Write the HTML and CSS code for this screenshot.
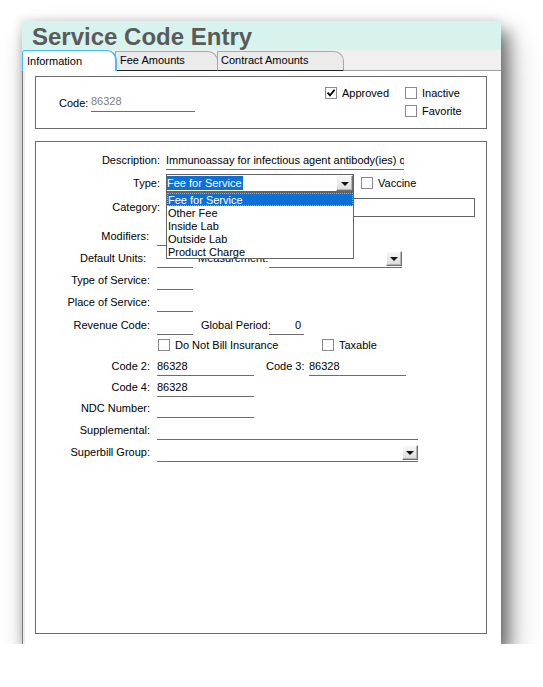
FILE: index.html
```html
<!DOCTYPE html>
<html>
<head>
<meta charset="utf-8">
<title>Service Code Entry</title>
<link rel="stylesheet" href="styles.css">
</head>
<body>
<div class="window">
  <div class="titlebar">Service Code Entry</div>
  <div class="tabbar">
    <div class="tab tab-info">Information</div>
    <div class="tab tab-fee">Fee Amounts</div>
    <div class="tab tab-contract">Contract Amounts</div>
    <div class="tab-fill"></div>
  </div>
  <div class="content">
    <div class="group group-top">
      <span class="code-lbl">Code:</span>
      <span class="code-field">86328</span>
      <div class="flags">
        <div class="chk flag-approved">
          <span class="box"><svg width="10" height="10" viewBox="0 0 10 10"><path d="M1.6 4.6 L4 7.4 L8.6 1.8" fill="none" stroke="#000" stroke-width="1.8"/></svg></span>Approved
        </div>
        <div class="flag-col">
          <div class="chk"><span class="box"></span>Inactive</div>
          <div class="chk"><span class="box"></span>Favorite</div>
        </div>
      </div>
    </div>

    <div class="group group-main">
      <div class="row row-top">
        <span class="lbl">Description:</span>
        <span class="fld w-desc">Immunoassay for infectious agent antibody(ies) qualitative</span>
      </div>
      <div class="row row-top row-type">
        <span class="lbl">Type:</span>
        <div class="select">
          <span class="sel-text">Fee for Service</span>
          <span class="ddbtn"><span class="tri"></span></span>
          <div class="ddlist">
            <div class="opt hl">Fee for Service</div>
            <div class="opt">Other Fee</div>
            <div class="opt">Inside Lab</div>
            <div class="opt">Outside Lab</div>
            <div class="opt">Product Charge</div>
          </div>
        </div>
        <div class="chk chk-vaccine"><span class="box"></span>Vaccine</div>
      </div>
      <div class="row row-top row-cat">
        <span class="lbl">Category:</span>
        <span class="cat"></span>
      </div>
      <div class="row row-mod">
        <span class="lbl lbl-mod">Modifiers:</span>
        <span class="fld w-short"></span>
      </div>
      <div class="row">
        <span class="lbl lbl-du">Default Units:</span>
        <span class="fld w-short"></span>
        <span class="sublbl sub-meas">Measurement:</span>
        <span class="fld uselect w-meas"><span class="ddbtn ddbtn-sm"><span class="tri"></span></span></span>
      </div>
      <div class="row">
        <span class="lbl">Type of Service:</span>
        <span class="fld w-short"></span>
      </div>
      <div class="row">
        <span class="lbl">Place of Service:</span>
        <span class="fld w-short"></span>
      </div>
      <div class="row row-rev">
        <span class="lbl">Revenue Code:</span>
        <span class="fld w-short"></span>
        <span class="sublbl sub-global">Global Period:</span>
        <span class="fld w-global">0</span>
      </div>
      <div class="row row-dnb">
        <span class="lbl"></span>
        <div class="chk chk-dnb"><span class="box"></span>Do Not Bill Insurance</div>
        <div class="chk"><span class="box"></span>Taxable</div>
      </div>
      <div class="row row-tight">
        <span class="lbl">Code 2:</span>
        <span class="fld w-code">86328</span>
        <span class="sublbl sub-code3">Code 3:</span>
        <span class="fld w-code">86328</span>
      </div>
      <div class="row row-tight">
        <span class="lbl">Code 4:</span>
        <span class="fld w-code">86328</span>
      </div>
      <div class="row row-tight">
        <span class="lbl">NDC Number:</span>
        <span class="fld w-code"></span>
      </div>
      <div class="row">
        <span class="lbl">Supplemental:</span>
        <span class="fld w-long"></span>
      </div>
      <div class="row">
        <span class="lbl">Superbill Group:</span>
        <span class="fld uselect w-long"><span class="ddbtn ddbtn-sm"><span class="tri"></span></span></span>
      </div>
    </div>
  </div>
</div>
</body>
</html>
```

FILE: styles.css
```css
* { box-sizing: border-box; }

body {
  margin: 0;
  background: #fff;
  font-family: "Liberation Sans", Arial, sans-serif;
  font-size: 11px;
  color: #000;
}

.window {
  margin: 21px 0 0 22px;
  width: 479px;
  height: 623px;
  display: flex;
  flex-direction: column;
  background: #fff;
  box-shadow: 7px 10px 16px rgba(0, 0, 0, 0.5), 10px 20px 32px rgba(0, 0, 0, 0.22), -2px -2px 8px rgba(0, 0, 0, 0.08);
}

.titlebar {
  height: 29px;
  padding: 3px 0 0 10px;
  background: #d8f3ee;
  color: #5a5a5a;
  font-size: 24px;
  font-weight: bold;
  line-height: 26px;
  white-space: nowrap;
}

.tabbar {
  height: 21px;
  background: #f0f0f0;
  display: flex;
  align-items: flex-end;
}

.tab {
  height: 20px;
  padding: 2px 0 0 4px;
  background: #ebebeb;
  border: 1px solid #a8a8a8;
  border-bottom: 1px solid #222;
  border-top-right-radius: 10px;
  line-height: 13px;
  white-space: nowrap;
}

.tab-info {
  width: 95px;
  height: 21px;
  padding-top: 4px;
  background: #fff;
  border: 1px solid #43c0ef;
  border-right-width: 2px;
  border-bottom: none;
  border-top-left-radius: 3px;
  position: relative;
  z-index: 1;
}

.tab-fee {
  width: 103px;
  margin-left: -2px;
}

.tab-contract {
  width: 127px;
  margin-left: -1px;
  padding-left: 3px;
}

.tab-fill {
  flex: 1;
  height: 1px;
  background: #a0a0a0;
}

.content {
  flex: 1;
  border-left: 1px solid #7a7a7a;
  box-shadow: inset 2px 0 #ececec;
  padding: 5px 14px 10px 12px;
  display: flex;
  flex-direction: column;
  gap: 12px;
}

.group {
  border: 1px solid #6b6b6b;
}

/* top group */
.group-top {
  height: 53px;
  flex: none;
  display: flex;
  align-items: center;
  padding-left: 23px;
}

.code-lbl {
  width: 32px;
}

.code-field {
  width: 104px;
  height: 19px;
  line-height: 17px;
  border-bottom: 1px solid #6d6d6d;
  color: #808080;
}

.flags {
  margin-left: 130px;
  margin-top: -1px;
  display: flex;
}

.flag-approved {
  width: 80px;
  align-self: flex-start;
}

.flag-col {
  display: flex;
  flex-direction: column;
}

.chk {
  display: flex;
  align-items: center;
  height: 18px;
  gap: 5px;
  white-space: nowrap;
}

.box {
  width: 12px;
  height: 12px;
  flex: none;
  border: 1px solid #8a8a8a;
  background: #fff;
  display: flex;
  align-items: center;
  justify-content: center;
}

/* main group */
.group-main {
  flex: 1;
  padding-top: 8px;
  display: flex;
  flex-direction: column;
  gap: 2px;
}

.row {
  display: flex;
  align-items: center;
  height: 20px;
  flex: none;
}

.row-type { margin-top: 1px; }
.row-cat { margin-top: 2px; }
.row-mod { margin-top: 7px; }
.row-rev { margin-top: 1px; }
.row-dnb { margin-top: -2px; }
.row-tight { margin-top: -1px; }

.lbl {
  flex: none;
  width: 114px;
  margin-right: 7px;
  text-align: right;
  white-space: nowrap;
}

.row-top .lbl {
  width: 124px;
  margin-right: 6px;
}

.lbl-mod {
  width: 113px;
  margin-right: 8px;
}

.lbl-du {
  width: 110px;
  margin-right: 11px;
}

.fld {
  flex: none;
  height: 19px;
  line-height: 18px;
  border-bottom: 1px solid #6d6d6d;
  white-space: nowrap;
  overflow: hidden;
}

.w-desc { width: 238px; }
.w-short { width: 36px; }
.w-code { width: 97px; }
.w-long { width: 261px; }
.w-meas { width: 133px; }
.w-global {
  width: 35px;
  text-align: right;
  padding-right: 3px;
}

.sublbl {
  flex: none;
  white-space: nowrap;
}

.sub-meas {
  margin-left: 5px;
  width: 71px;
}

.sub-global {
  margin-left: 8px;
  width: 68px;
}

.sub-code3 {
  margin-left: 12px;
  width: 43px;
}

.chk-dnb {
  margin-left: 1px;
  width: 164px;
}

.chk-vaccine {
  margin-left: 7px;
}

/* select with dropdown */
.select {
  flex: none;
  width: 188px;
  height: 18px;
  border: 1px solid #646464;
  display: flex;
  align-items: center;
  position: relative;
  background: #fff;
}

.sel-text {
  background: #0e6fd7;
  color: #fff;
  line-height: 14px;
  padding: 0 1px 0 0;
}

.ddbtn {
  margin-left: auto;
  width: 17px;
  height: 16px;
  flex: none;
  background: linear-gradient(#f7f7f7, #dcdcdc);
  border: 1px solid;
  border-color: #ffffff #6f6f6f #6f6f6f #ffffff;
  box-shadow: inset -1px -1px #b5b5b5;
  display: flex;
  align-items: center;
  justify-content: center;
}

.ddbtn-sm {
  width: 16px;
  height: 15px;
}

.tri {
  width: 0;
  height: 0;
  border-left: 4px solid transparent;
  border-right: 4px solid transparent;
  border-top: 4px solid #111;
  margin-top: 1px;
}

.uselect {
  display: flex;
  justify-content: flex-end;
  align-items: flex-end;
  padding-bottom: 1px;
}

.ddlist {
  position: absolute;
  top: calc(100% + 1px);
  left: -1px;
  width: 188px;
  border: 1px solid #646464;
  background: #fff;
  z-index: 5;
}

.opt {
  height: 13px;
  line-height: 14px;
  padding-left: 1px;
  white-space: nowrap;
}

.opt.hl {
  background: #0e6fd7;
  color: #fff;
  outline: 1px dotted #e8a33d;
  outline-offset: -1px;
}

.cat {
  flex: none;
  width: 309px;
  height: 19px;
  border: 1px solid #646464;
}
```
